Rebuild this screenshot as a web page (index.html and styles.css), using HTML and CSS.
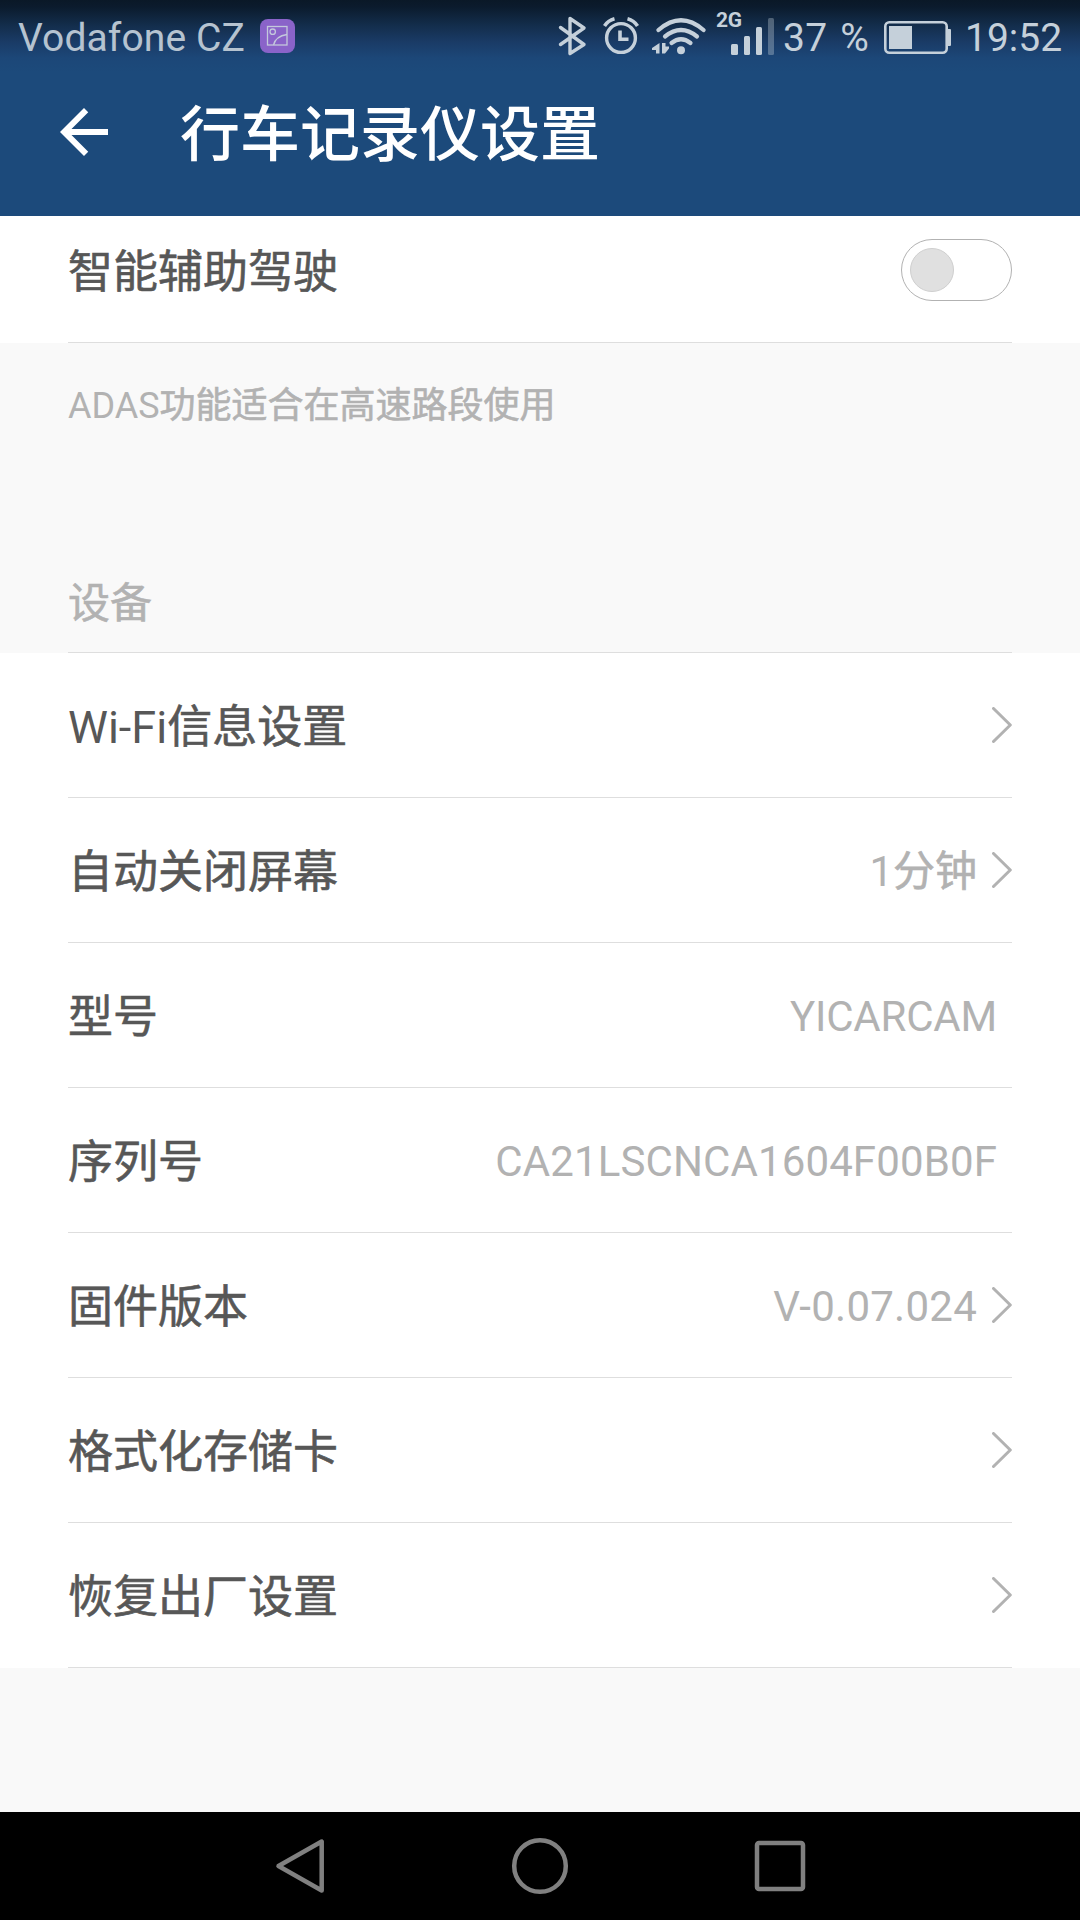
FILE: index.html
```html
<!DOCTYPE html>
<html lang="zh-CN">
<head>
  <meta charset="utf-8">
  <title>行车记录仪设置</title>
  <link rel="stylesheet" href="styles.css">
</head>
<body>
  <div class="top">
    <div class="status-bar">
      <div class="status-left">
        <span class="carrier">Vodafone CZ</span>
        <svg class="badge-icon" width="35" height="35" viewBox="0 0 35 35">
          <rect width="35" height="34" rx="8" fill="#8a63c9"/>
          <g fill="none" stroke="#c3c8dc" stroke-width="1.3">
            <rect x="7.5" y="7.5" width="19.5" height="18.5"/>
            <circle cx="12.7" cy="12.7" r="2.7"/>
            <path d="M13.5 26C15 20 20 16.5 27 15.5"/>
          </g>
        </svg>
      </div>
      <div class="status-right">
        <svg class="bluetooth" width="29" height="72" viewBox="558 0 29 72">
          <path d="M560.5 27.5L584 44.5L570 53.5V18.5L584 28L560.5 44.5" fill="none" stroke="#c5d0da" stroke-width="3.4" stroke-linejoin="round" stroke-linecap="round"/>
        </svg>
        <svg class="alarm" width="37" height="72" viewBox="603 0 37 72">
          <g fill="none" stroke="#c5d0da">
            <circle cx="621" cy="38" r="14.4" stroke-width="3.4"/>
            <path d="M620 30.5V39.3H628.5" stroke-width="3.6"/>
            <path d="M604.5 26Q608 20.5 614.5 18.8M637.5 26Q634 20.5 627.5 18.8" stroke-width="3.6"/>
          </g>
        </svg>
        <svg class="wifi" width="54" height="72" viewBox="652 0 54 72">
          <g fill="none" stroke="#c5d0da" stroke-width="4.2" stroke-linecap="round">
            <path d="M658.5 30Q681 10.5 703.5 30"/>
            <path d="M665 36.5Q681 23.500 697 36.5"/>
            <path d="M671.5 43Q681 35.5 690.5 43"/>
          </g>
          <circle cx="681" cy="50.2" r="4" fill="#c5d0da"/>
          <path d="M659.5 43V53.5H656V50H652V48ZM662 43H665.500V46.500H669V48.500L665 53.500H662Z" fill="#c5d0da"/>
        </svg>
        <div class="signal">
          <span class="network">2G</span>
          <svg width="44" height="72" viewBox="731 0 44 72" fill="#c5d0da">
            <rect x="731" y="44" width="7" height="11" rx="1.5"/>
            <rect x="744" y="36" width="6" height="19" rx="1.5"/>
            <rect x="756" y="27" width="6" height="28" rx="1.5"/>
            <rect x="768" y="18" width="6" height="37" rx="1.5" opacity="0.35"/>
          </svg>
        </div>
        <span class="percent">37 %</span>
        <svg class="battery" width="67" height="72" viewBox="884 0 67 72">
          <rect x="885.3" y="22.3" width="61.4" height="30.4" rx="4" fill="none" stroke="#c5d0da" stroke-width="2.6"/>
          <path d="M889 26H912V49H889ZM948 29H950Q951 29 951 30V45Q951 46 950 46H948Z" fill="#c5d0da"/>
        </svg>
        <span class="clock">19:52</span>
      </div>
    </div>
    <div class="title-bar">
      <svg class="back" width="72" height="72" viewBox="0 0 24 24">
        <path d="M20 11H7.83l5.59-5.59L12 4l-8 8 8 8 1.41-1.41L7.83 13H20v-2z" fill="#fff"/>
      </svg>
      <h1>行车记录仪设置</h1>
    </div>
  </div>

  <div class="content">
    <div class="group">
      <div class="row row-adas">
        <span class="label"><span class="cjk">智能辅助驾驶</span></span>
        <div class="toggle"><div class="knob"></div></div>
      </div>
    </div>

    <div class="hint">ADAS<span class="cjk">功能适合在高速路段使用</span></div>
    <div class="section-title">
      <div class="section-inner"><span class="cjk">设备</span></div>
    </div>

    <div class="group">
      <div class="row">
        <span class="label">Wi-Fi<span class="cjk">信息设置</span></span>
        <svg class="chevron" width="20" height="36" viewBox="0 0 20 36"><path d="M1.5 1.5L18.3 18L1.5 34.5"/></svg>
      </div>
      <div class="row">
        <span class="label"><span class="cjk">自动关闭屏幕</span></span>
        <span class="value">1<span class="cjk">分钟</span></span>
        <svg class="chevron" width="20" height="36" viewBox="0 0 20 36"><path d="M1.5 1.5L18.3 18L1.5 34.5"/></svg>
      </div>
      <div class="row">
        <span class="label"><span class="cjk">型号</span></span>
        <span class="value model">YICARCAM</span>
      </div>
      <div class="row">
        <span class="label"><span class="cjk">序列号</span></span>
        <span class="value serial">CA21LSCNCA1604F00B0F</span>
      </div>
      <div class="row">
        <span class="label"><span class="cjk">固件版本</span></span>
        <span class="value version">V-0.07.024</span>
        <svg class="chevron" width="20" height="36" viewBox="0 0 20 36"><path d="M1.5 1.5L18.3 18L1.5 34.5"/></svg>
      </div>
      <div class="row">
        <span class="label"><span class="cjk">格式化存储卡</span></span>
        <svg class="chevron" width="20" height="36" viewBox="0 0 20 36"><path d="M1.5 1.5L18.3 18L1.5 34.5"/></svg>
      </div>
      <div class="row">
        <span class="label"><span class="cjk">恢复出厂设置</span></span>
        <svg class="chevron" width="20" height="36" viewBox="0 0 20 36"><path d="M1.5 1.5L18.3 18L1.5 34.5"/></svg>
      </div>
    </div>
  </div>

  <div class="nav-bar">
    <svg width="60" height="60" viewBox="0 0 60 60"><path d="M51.7 5.5V54.5L8.5 30Z"/></svg>
    <svg width="60" height="60" viewBox="0 0 60 60"><circle cx="30" cy="30" r="25.8"/></svg>
    <svg width="60" height="60" viewBox="0 0 60 60"><rect x="7" y="7" width="46" height="46" rx="2"/></svg>
  </div>
</body>
</html>
```

FILE: styles.css
```css
* {
  box-sizing: border-box;
}

body {
  width: 1080px;
  height: 1920px;
  margin: 0;
  display: flex;
  flex-direction: column;
  overflow: hidden;
  background: #f9f9f9;
  font-family: Roboto, "Noto Sans CJK SC", sans-serif;
}

svg {
  display: block;
  flex: none;
}

/* the CJK glyphs look thin next to Roboto */
.cjk {
  -webkit-text-stroke: 0.6px currentColor;
}

.top {
  height: 216px;
  background: linear-gradient(#0a1827 0px, #0b1b2d 7px, #132d4b 25px, #1a3b66 42px, #1c4778 58px, #1c4a7b 72px);
}

/* status bar */
.status-bar {
  height: 72px;
  display: flex;
  justify-content: space-between;
  padding: 0 18px;
  font-size: 39px;
  line-height: 76px;
  color: #c5d0da;
}

.status-left,
.status-right {
  display: flex;
  white-space: nowrap;
}

.carrier {
  width: 242px;
  color: #b6c3d0;
  letter-spacing: 0.1px;
}

.badge-icon {
  margin-top: 19px;
}

.alarm {
  margin-left: 16px;
}

.wifi {
  margin-left: 12px;
}

.signal {
  display: flex;
  margin-left: 10px;
}

.network {
  width: 15px;
  font-size: 21px;
  font-weight: 700;
  line-height: 40px;
  letter-spacing: -0.3px;
}

.percent {
  width: 101px;
  margin-left: 8px;
  letter-spacing: 0.4px;
  word-spacing: 2.5px;
}

.clock {
  width: 97px;
  margin-left: 14px;
}

/* title */
.title-bar {
  height: 120px;
  display: flex;
  align-items: center;
  padding-left: 48px;
}

.title-bar h1 {
  margin: 8px 0 0 60px;
  color: #fff;
  font-size: 60px;
  font-weight: 500;
  line-height: 80px;
}

/* settings list */
.content {
  flex: 1;
}

.group {
  padding: 0 68px;
  background: #fff;
}

.row {
  height: 145px;
  display: flex;
  align-items: center;
  border-bottom: 1px solid #dedede;
}

.row-adas {
  height: 127px;
  padding-bottom: 18px;
}

.label {
  flex: 1;
  padding-top: 6px;
  color: #575757;
  font-size: 45px;
  line-height: 60px;
}

.value {
  margin-right: 15px;
  padding-top: 4px;
  color: #b2b2b2;
  font-size: 42px;
  line-height: 60px;
}

.model {
  letter-spacing: -0.2px;
}

.serial {
  letter-spacing: 0.12px;
}

.version {
  letter-spacing: 0.25px;
}

.chevron path {
  fill: none;
  stroke: #b2b2b2;
  stroke-width: 3;
  stroke-linecap: round;
  stroke-linejoin: round;
}

.toggle {
  width: 111px;
  height: 62px;
  padding: 8px;
  border: 1px solid #b2b2b2;
  border-radius: 31px;
}

.knob {
  width: 44px;
  height: 44px;
  border: 1px solid #cfcfcf;
  border-radius: 50%;
  background: #e0e0e0;
}

.hint {
  height: 200px;
  padding: 38px 68px 0;
  color: #b2b2b2;
  font-size: 36px;
  line-height: 50px;
}

.section-title {
  padding: 0 68px;
}

.section-inner {
  height: 110px;
  padding-top: 31px;
  border-bottom: 1px solid #dedede;
  color: #b2b2b2;
  font-size: 42px;
  line-height: 60px;
}

/* navigation */
.nav-bar {
  height: 108px;
  display: flex;
  justify-content: center;
  align-items: center;
  gap: 180px;
  background: #000;
}

.nav-bar svg {
  fill: none;
  stroke: #808080;
  stroke-width: 4.5;
  stroke-linejoin: round;
}
```
